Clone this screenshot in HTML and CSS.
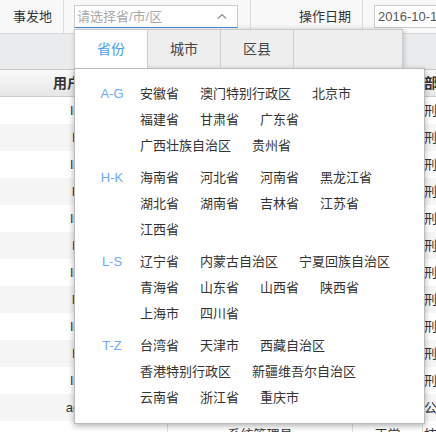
FILE: index.html
```html
<!DOCTYPE html>
<html lang="zh-CN">
<head>
    <meta charset="UTF-8">
    <meta name="viewport" content="width=device-width, initial-scale=1.0">
    <title>Area picker</title>
    <link rel="stylesheet" href="styles.css">
</head>
<body>
    <div class="filter-bar">
        <div class="filter-label first">事发地</div>
        <div class="select">
            <input type="text" class="select-input" placeholder="请选择省/市/区">
            <svg class="arrow" width="10" height="6" viewBox="0 0 10 6"><polyline points="1,5.5 5,1.5 9,5.5" fill="none" stroke="#888" stroke-width="1.1"/></svg>

            <!-- dropdown -->
            <div class="area-picker">
                <div class="tabs">
                    <div class="tab active">省份</div>
                    <div class="tab">城市</div>
                    <div class="tab">区县</div>
                </div>
                <div class="panel">
                    <div class="group">
                        <div class="group-label">A-G</div>
                        <div class="items">
                            <span>安徽省</span><span>澳门特别行政区</span><span>北京市</span>
                            <span>福建省</span><span>甘肃省</span><span>广东省</span>
                            <span>广西壮族自治区</span><span>贵州省</span>
                        </div>
                    </div>
                    <div class="group">
                        <div class="group-label">H-K</div>
                        <div class="items">
                            <span>海南省</span><span>河北省</span><span>河南省</span><span>黑龙江省</span>
                            <span>湖北省</span><span>湖南省</span><span>吉林省</span><span>江苏省</span>
                            <span>江西省</span>
                        </div>
                    </div>
                    <div class="group">
                        <div class="group-label">L-S</div>
                        <div class="items">
                            <span>辽宁省</span><span>内蒙古自治区</span><span>宁夏回族自治区</span>
                            <span>青海省</span><span>山东省</span><span>山西省</span><span>陕西省</span>
                            <span>上海市</span><span>四川省</span>
                        </div>
                    </div>
                    <div class="group">
                        <div class="group-label">T-Z</div>
                        <div class="items">
                            <span>台湾省</span><span>天津市</span><span>西藏自治区</span>
                            <span>香港特别行政区</span><span>新疆维吾尔自治区</span>
                            <span>云南省</span><span>浙江省</span><span>重庆市</span>
                        </div>
                    </div>
                </div>
            </div>
        </div>
        <div class="filter-label second">操作日期</div>
        <input type="text" class="date-input" value="2016-10-18">
    </div>

    <div class="toolbar"></div>

    <div class="grid">
        <div class="row head">
            <div class="cell c1">用户账号</div>
            <div class="cell c2">角色</div>
            <div class="cell c3">状态</div>
            <div class="cell c4">部门</div>
        </div>
        <div class="row"><div class="cell c1">liyan</div><div class="cell c2">普通用户</div><div class="cell c3">正常</div><div class="cell c4">刑侦大队</div></div>
        <div class="row"><div class="cell c1">lixin</div><div class="cell c2">普通用户</div><div class="cell c3">正常</div><div class="cell c4">刑侦大队</div></div>
        <div class="row"><div class="cell c1">liyun</div><div class="cell c2">普通用户</div><div class="cell c3">正常</div><div class="cell c4">刑侦大队</div></div>
        <div class="row"><div class="cell c1">lijun</div><div class="cell c2">普通用户</div><div class="cell c3">正常</div><div class="cell c4">刑侦大队</div></div>
        <div class="row"><div class="cell c1">liyan</div><div class="cell c2">普通用户</div><div class="cell c3">正常</div><div class="cell c4">刑侦大队</div></div>
        <div class="row"><div class="cell c1">lixin</div><div class="cell c2">普通用户</div><div class="cell c3">正常</div><div class="cell c4">刑侦大队</div></div>
        <div class="row"><div class="cell c1">liyun</div><div class="cell c2">普通用户</div><div class="cell c3">正常</div><div class="cell c4">刑侦大队</div></div>
        <div class="row"><div class="cell c1">lijun</div><div class="cell c2">普通用户</div><div class="cell c3">正常</div><div class="cell c4">刑侦大队</div></div>
        <div class="row"><div class="cell c1">liyan</div><div class="cell c2">普通用户</div><div class="cell c3">正常</div><div class="cell c4">刑侦大队</div></div>
        <div class="row"><div class="cell c1">lixin</div><div class="cell c2">普通用户</div><div class="cell c3">正常</div><div class="cell c4">刑侦大队</div></div>
        <div class="row"><div class="cell c1">liyun</div><div class="cell c2">普通用户</div><div class="cell c3">正常</div><div class="cell c4">刑侦大队</div></div>
        <div class="row"><div class="cell c1">admin</div><div class="cell c2">系统管理员</div><div class="cell c3">正常</div><div class="cell c4">公安局</div></div>
        <div class="row"><div class="cell c1">sys</div><div class="cell c2">系统管理员</div><div class="cell c3">正常</div><div class="cell c4">技术科</div></div>
    </div>
</body>
</html>
```

FILE: styles.css
```css
*{
    margin: 0;
    padding: 0;
    box-sizing: border-box;
}
body{
    font-family: 'Liberation Sans', 'Noto Sans CJK SC', sans-serif;
    font-size: 13px;
    color: #333;
    background: #fff;
    width: 436px;
    height: 432px;
    overflow: hidden;
}

/* ---------- filter bar ---------- */
.filter-bar{
    display: flex;
    align-items: center;
    height: 34px;
    background: #f8f8f8;
    border-bottom: 1px solid #d6d6d6;
    white-space: nowrap;
}
.filter-bar > *{
    flex-shrink: 0;
}
.filter-label{
    height: 33px;
    line-height: 33px;
    text-align: right;
    padding-right: 11px;
    border-right: 1px solid #dcdcdc;
}
.filter-label.first{
    width: 64px;
}
.filter-label.second{
    width: 113px;
    margin-left: 12px;
    border-left: 1px solid #dcdcdc;
}
.select{
    position: relative;
    margin-left: 10px;
    width: 164px;
    height: 23px;
}
.select-input,
.date-input{
    width: 100%;
    height: 23px;
    border: 1px solid #ccc;
    background: #fff;
    font-family: inherit;
    font-size: 13px;
    padding-left: 2px;
    outline: none;
}
.select-input{
    border-bottom-color: #4a90e2;
}
.select-input::placeholder{
    color: #a9a9a9;
}
.date-input{
    width: 110px;
    margin-left: 11px;
    color: #555;
    padding-left: 3px;
}
.arrow{
    position: absolute;
    right: 11px;
    top: 8px;
}

/* ---------- dropdown ---------- */
.area-picker{
    position: absolute;
    left: 0;
    top: 24px;
    width: 351px;
    z-index: 10;
}
.tabs{
    display: flex;
    width: 329px;
    height: 39px;
    background: #eee;
    border: 1px solid #ccc;
    border-bottom: none;
    box-shadow: 1px 0 5px rgba(0,0,0,0.18);
}
.tab{
    width: 73px;
    height: 38px;
    line-height: 38px;
    text-align: center;
    font-size: 14px;
    color: #444;
    border-right: 1px solid #ccc;
}
.tab.active{
    background: #fff;
    color: #4d9bf4;
}
.panel{
    background: #fff;
    border: 1px solid #bbb;
    padding: 12px 16px 12px 15px;
    box-shadow: 0 2px 6px rgba(0,0,0,0.3);
}
.group{
    display: flex;
    margin-bottom: 6px;
}
.group:last-child{
    margin-bottom: 0;
}
.group-label{
    width: 44px;
    margin-right: 6px;
    flex-shrink: 0;
    text-align: center;
    line-height: 26px;
    color: #6ea8f6;
}
.items{
    display: flex;
    flex-wrap: wrap;
    column-gap: 21px;
    flex: 1;
}
.items span{
    line-height: 26px;
    color: #333;
    white-space: nowrap;
}

/* ---------- background grid ---------- */
.toolbar{
    height: 36px;
    background: #e9ebec;
    border-bottom: 1px solid #c9c9c9;
}
.row{
    display: grid;
    grid-template-columns: 168px 185px 70px 1fr;
    height: 27px;
    line-height: 27px;
    white-space: nowrap;
}
.row:nth-child(odd){
    background: #f5f5f5;
}
.row.head{
    background: linear-gradient(#fafafa, #e6e6e6);
    border-bottom: 1px solid #ccc;
    font-weight: bold;
    font-size: 14px;
}
.cell{
    overflow: hidden;
    border-right: 1px solid #ddd;
}
.cell.c1{
    text-align: center;
}
.cell.c2,
.cell.c3{
    text-align: center;
}
.cell.c4{
    border-right: none;
    padding-left: 1px;
}
.head .cell.c1{
    text-align: left;
    padding-left: 53px;
}
```
